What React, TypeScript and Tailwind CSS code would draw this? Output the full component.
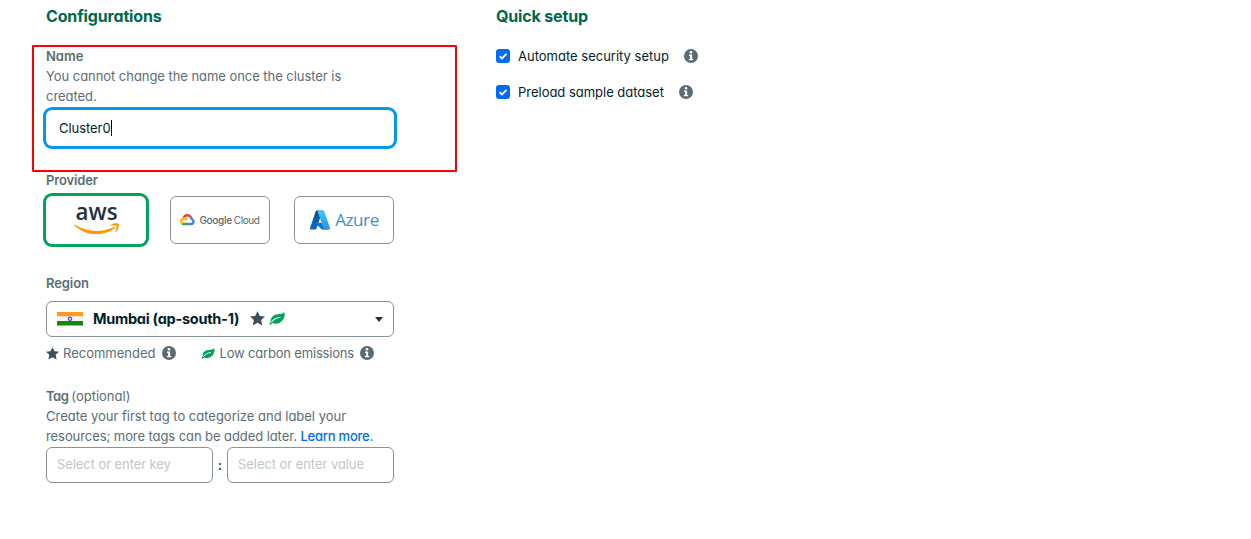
import type { ReactNode } from "react";

function InfoIcon() {
  return (
    <svg viewBox="0 0 14 14" className="size-3.5 shrink-0">
      <circle cx="7" cy="7" r="7" fill="#5c6c75" />
      <circle cx="7" cy="3.3" r="1.3" fill="#fff" />
      <path d="M5 5.6h3.1v4.3h1.1v1.3H4.8V9.9h1.3v-3H5z" fill="#fff" />
    </svg>
  );
}

function Star({ className }: { className: string }) {
  return (
    <svg viewBox="0 0 24 24" className={className} fill="#3d4f58">
      <path d="M12 .3l3.700 7.600 8.300.9-6.200 5.700 1.800 8.700L12 18.800l-7.600 4.400 1.800-8.700L0 8.800l8.300-.9z" />
    </svg>
  );
}

function Leaf({ className }: { className: string }) {
  return (
    <svg viewBox="0 0 16 13" className={className}>
      <path d="M15.600.2c.6 4.200-.8 8.200-4.300 10.300-2.500 1.500-5.600 1.600-8 .6L1.500 12.800.2 12.200l1.400-2.200C1.300 6.500 3.200 3.800 6.300 2.700 9.500 1.600 12.800 2.400 15.600.2z" fill="#00a35c" />
      <path d="M2.700 9.900C4.500 7.400 7.300 5.900 11 5.300" fill="none" stroke="#fff" strokeWidth="1.100" strokeLinecap="round" />
    </svg>
  );
}

function AwsLogo() {
  return (
    <svg viewBox="0 -14 46 60" className="-my-1.5 ml-px h-[60px] w-[46px] shrink-0">
      <text x="1.500" y="16" textLength="42" lengthAdjust="spacingAndGlyphs" fontSize="24" fontWeight="600" fill="#252f3e" className="font-['Open_Sans',sans-serif] tracking-normal">aws</text>
      <path d="M.6 20.600C12.500 28.400 28 28.600 39.500 23.200c1.400-.6 2.200.6.9 1.500C29 32.700 11 32 .4 21.400c-.5-.6-.3-1 .2-.8z" fill="#f90" />
      <path d="M36.400 21c2.600-1.900 7.500-2 8.300-1.200.8.9-.2 6-2.700 8.300-.5.4-1 .2-.8-.4.700-1.800 1.900-4.900 1.300-5.800-.6-.8-3.600-.5-5.600-.3-.7.100-.9-.3-.5-.6z" fill="#f90" />
    </svg>
  );
}

function GoogleCloudLogo() {
  return (
    <div className="flex items-center">
      <svg viewBox="0 0 15 12" className="mr-1 h-3 w-[15px]" fill="none" strokeWidth="2.500">
        <path d="M3.600 4.100C4.900.9 9.100.2 11 3.500" stroke="#ea4335" />
        <path d="M11 3.300c.4.600.6 1.200.7 1.900 2.600 1 2.300 4.800-.9 4.900H7.500" stroke="#4285f4" />
        <path d="M8 10.100H4.100c-.7 0-1.300-.2-1.800-.6" stroke="#34a853" />
        <path d="M2.700 9.700C.3 8.100 1.200 4.400 4.200 4.600c1.200.1 2 .6 2.600 1.700" stroke="#fbbc04" />
      </svg>
      <span className="text-[10px] font-medium tracking-[-0.300px] text-[#5f6368]">Google</span>
      <span className="ml-[2px] text-[10px] tracking-[-0.400px] text-[#5f6368]">Cloud</span>
    </div>
  );
}

function AzureLogo() {
  return (
    <div className="flex items-center">
      <svg viewBox="0 0 96 96" className="mr-1 size-[22px]">
        <defs>
          <linearGradient id="azDark" x1="58" y1="10" x2="24" y2="90" gradientUnits="userSpaceOnUse">
            <stop stopColor="#114a8b" />
            <stop offset="1" stopColor="#0669bc" />
          </linearGradient>
          <linearGradient id="azLight" x1="46" y1="10" x2="82" y2="88" gradientUnits="userSpaceOnUse">
            <stop stopColor="#3ccbf4" />
            <stop offset="1" stopColor="#2892df" />
          </linearGradient>
        </defs>
        <path d="M33.300 6.500h26L32.300 86.600a4.200 4.200 0 0 1-3.900 2.800H8.100A4.100 4.100 0 0 1 4.200 84L29.400 9.300a4.200 4.200 0 0 1 3.900-2.800z" fill="url(#azDark)" />
        <path d="M71.200 60.300H29.900a1.900 1.900 0 0 0-1.300 3.300l26.500 24.700a4.200 4.200 0 0 0 2.900 1.100h23.400z" fill="#0078d4" />
        <path d="M66.600 9.300a4.100 4.100 0 0 0-3.900-2.800H33.600a4.200 4.200 0 0 1 4 2.800L62.800 84a4.200 4.200 0 0 1-4 5.500h29.100a4.200 4.200 0 0 0 3.900-5.500z" fill="url(#azLight)" />
      </svg>
      <span className="font-['Open_Sans',sans-serif] text-[17px] leading-6 tracking-[-0.400px] text-[#2d94dc]">Azure</span>
    </div>
  );
}

function ProviderCard({ selected, children }: { selected?: boolean; children: ReactNode }) {
  return (
    <button
      className={
        selected
          ? "flex h-12 w-[100px] items-center justify-center rounded-md bg-white ring-3 ring-[#00a35c]"
          : "flex h-12 w-[100px] items-center justify-center rounded-md border border-[#889397] bg-white"
      }
    >
      {children}
    </button>
  );
}

function Option({ label, spacing }: { label: string; spacing: string }) {
  return (
    <label className="flex h-5 items-center text-[#001e2b]">
      <svg viewBox="0 0 14 14" className="mr-2 size-3.5">
        <rect width="14" height="14" rx="3" fill="#016bf8" />
        <path d="M3.600 7.200l2.400 2.300 4.500-4.700" fill="none" stroke="#fff" strokeWidth="1.900" />
      </svg>
      <span className={spacing}>{label}</span>
      <span className="ml-[15px]">
        <InfoIcon />
      </span>
    </label>
  );
}

export default function App() {
  return (
    <main className="relative flex h-[539px] w-full gap-[102px] overflow-hidden bg-white pt-1 pl-[46px] font-['Inter',sans-serif] text-[13px] leading-5 whitespace-nowrap text-[#5c6c75] [font-feature-settings:'cv11']">
      <section className="w-[348px]">
        <h2 className="text-base leading-6 font-bold tracking-[-0.15px] text-[#00684a]">Configurations</h2>

        <div className="mt-[18px]">
          <div className="font-semibold">Name</div>
          <p className="tracking-[-0.05px]">
            You cannot change the name once the cluster is
            <br />
            created.
          </p>
          <div className="mt-1 flex h-9 items-center rounded-md pl-[13px] text-[#001e2b] ring-3 ring-[#0498ec]">
            <span className="tracking-[-0.05px]">Cluster0</span>
            <span className="h-4 w-px bg-black" />
          </div>
        </div>

        <div className="mt-6">
          <div className="font-semibold tracking-[-0.15px]">Provider</div>
          <div className="mt-1.5 flex gap-6">
            <ProviderCard selected>
              <AwsLogo />
            </ProviderCard>
            <ProviderCard>
              <GoogleCloudLogo />
            </ProviderCard>
            <ProviderCard>
              <AzureLogo />
            </ProviderCard>
          </div>
        </div>

        <div className="mt-[29px]">
          <div className="font-semibold tracking-[-0.1px]">Region</div>
          <div className="mt-2 flex h-9 items-center rounded-md border border-[#889397] pr-2.5 pl-2.5">
            <svg viewBox="0 0 26 14" className="h-3.5 w-[26px]">
              <rect width="26" height="4.500" fill="#ff9a1f" />
              <rect y="4.500" width="26" height="4.500" fill="#f4f4f4" />
              <rect y="9" width="26" height="4.500" fill="#128807" />
              <circle cx="13" cy="6.800" r="1.700" fill="#dcdcff" stroke="#5050e0" strokeWidth="1.200" />
            </svg>
            <span className="ml-2.5 text-[14.500px] font-bold tracking-[-0.260px] text-[#001e2b]">Mumbai (ap-south-1)</span>
            <Star className="mb-0.5 ml-[11px] size-[15px]" />
            <Leaf className="mb-0.5 ml-1 h-[13px] w-4" />
            <svg viewBox="0 0 8 5" className="ml-auto h-[5px] w-2">
              <path d="M0 0h8L4 5z" fill="#21313c" />
            </svg>
          </div>
          <div className="mt-1.5 flex items-center">
            <Star className="mr-1 size-[13px]" />
            <span>Recommended</span>
            <span className="ml-1.5">
              <InfoIcon />
            </span>
            <Leaf className="mr-[5px] ml-[25px] h-[11px] w-3.5" />
            <span className="tracking-[-0.180px]">Low carbon emissions</span>
            <span className="ml-1.5">
              <InfoIcon />
            </span>
          </div>
        </div>

        <div className="mt-[23px]">
          <div>
            <span className="font-semibold tracking-[-0.500px]">Tag</span>
            <span className="ml-[3px]">(optional)</span>
          </div>
          <p className="tracking-[-0.010px]">Create your first tag to categorize and label your</p>
          <p className="tracking-[-0.080px]">
            resources; more tags can be added later.{" "}
            <a className="font-medium tracking-[-0.220px] text-[#016bf8]">Learn more.</a>
          </p>
          <div className="mt-px flex h-9 items-stretch text-[#c1c7c6]">
            <div className="flex w-[167px] items-center rounded-md border border-[#889397] pb-0.5 pl-2.5 tracking-[-0.080px]">Select or enter key</div>
            <div className="flex w-3.5 items-center justify-center font-bold text-[#3d4f58]">:</div>
            <div className="flex w-[167px] items-center rounded-md border border-[#889397] pb-0.5 pl-2.5 tracking-[-0.060px]">Select or enter value</div>
          </div>
        </div>
      </section>

      <section>
        <h2 className="text-base leading-6 font-bold tracking-[-0.150px] text-[#00684a]">Quick setup</h2>
        <div className="mt-[18px] flex flex-col gap-4">
          <Option label="Automate security setup" spacing="" />
          <Option label="Preload sample dataset" spacing="tracking-[-0.020px]" />
        </div>
      </section>

      <div className="pointer-events-none absolute top-[45px] left-8 h-[127px] w-[425px] rounded-[1px] border-2 border-[#fa0008]" />
    </main>
  );
}
